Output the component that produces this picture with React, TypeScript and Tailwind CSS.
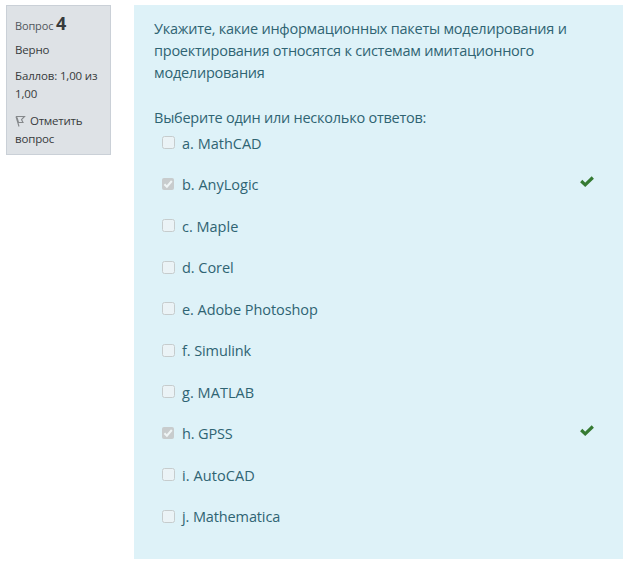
const answers = [
  { label: 'a. MathCAD', tracking: 'tracking-[0px]' },
  { label: 'b. AnyLogic', tracking: 'tracking-[0px]', checked: true },
  { label: 'c. Maple', tracking: 'tracking-[0px]' },
  { label: 'd. Corel', tracking: 'tracking-[-0.05px]' },
  { label: 'e. Adobe Photoshop', tracking: 'tracking-[-0.06px]' },
  { label: 'f. Simulink', tracking: 'tracking-[-0.1px]' },
  { label: 'g. MATLAB', tracking: 'tracking-[0.05px]' },
  { label: 'h. GPSS', tracking: 'tracking-[-0.15px]', checked: true },
  { label: 'i. AutoCAD', tracking: 'tracking-[0.08px]' },
  { label: 'j. Mathematica', tracking: 'tracking-[-0.12px]' },
];

function Checkbox({ checked }: { checked?: boolean }) {
  if (!checked) {
    return <span className="block size-[13px] shrink-0 rounded-[2.5px] border border-[#c6cccd] bg-[#ebf3f6]" />;
  }
  return (
    <span className="mr-px block size-3 shrink-0 rounded-[2px] bg-[#c8cccd]">
      <svg viewBox="0 0 12 12" className="size-3" fill="none" stroke="#eff5f6" strokeWidth="2">
        <path d="M2.4 6.2 4.9 8.7 9.8 3" />
      </svg>
    </span>
  );
}

function CorrectMark() {
  return (
    <svg viewBox="0 0 14 11" className="mt-[-2px] mr-[29px] ml-auto h-[11px] w-[14px]" fill="none" stroke="#357a32" strokeWidth="3.2">
      <path d="M1.2 5 5.2 8.8 12.8 1.5" />
    </svg>
  );
}

export default function App() {
  return (
    <div className="flex h-[565px] w-[631px] items-start bg-white pt-[5px] pl-[6px] font-['Open_Sans','Noto_Sans',sans-serif]">
      <aside className="h-[150px] w-[105px] shrink-0 border border-[#cad0d7] bg-[#dee2e6] pl-2 text-[11.5px] leading-[18px] tracking-[-0.15px] text-[#373a3c]">
        <h3 className="mt-[5px] h-[25px] leading-6 whitespace-nowrap">
          <span className="text-[11px] text-[#50565c]">Вопрос</span> <span className="text-[18px] font-bold">4</span>
        </h3>
        <div className="mt-[5px]">Верно</div>
        <div className="mt-2 whitespace-nowrap">Баллов: 1,00 из<br />1,00</div>
        <div className="mt-[9px] whitespace-nowrap">
          <svg viewBox="0 0 12 12" className="mr-[3px] inline-block size-3 align-[-2px]" fill="none" stroke="#85888b" strokeWidth="1.1">
            <path d="M1 1.5 4 11.5M1 1.5H9.5L6.5 4.5 8 7.5H3.5L2 2.5" />
          </svg>
          <span className="tracking-[-0.25px]">Отметить</span><br />вопрос
        </div>
      </aside>
      <main className="ml-[23px] h-[554px] w-[489px] bg-[#def2f8] pt-[13px] pl-5 text-[14.5px] leading-[22px] text-[#2f6473]">
        <div className="tracking-[-0.24px] whitespace-nowrap">
          <p>Укажите, какие информационных пакеты моделирования и</p>
          <p>проектирования относятся к системам имитационного</p>
          <p>моделирования</p>
        </div>
        <p className="mt-[23px] tracking-[-0.24px] whitespace-nowrap">Выберите один или несколько ответов:</p>
        <ul className="mt-1 pl-2">
          {answers.map(({ label, tracking, checked }) => (
            <li key={label} className="flex h-[41.5px] items-start pt-[3px]">
              <Checkbox checked={checked} />
              <span className={`ml-[7px] ${tracking} mt-[-3.4px] whitespace-nowrap`}>{label}</span>
              {checked && <CorrectMark />}
            </li>
          ))}
        </ul>
      </main>
    </div>
  );
}
